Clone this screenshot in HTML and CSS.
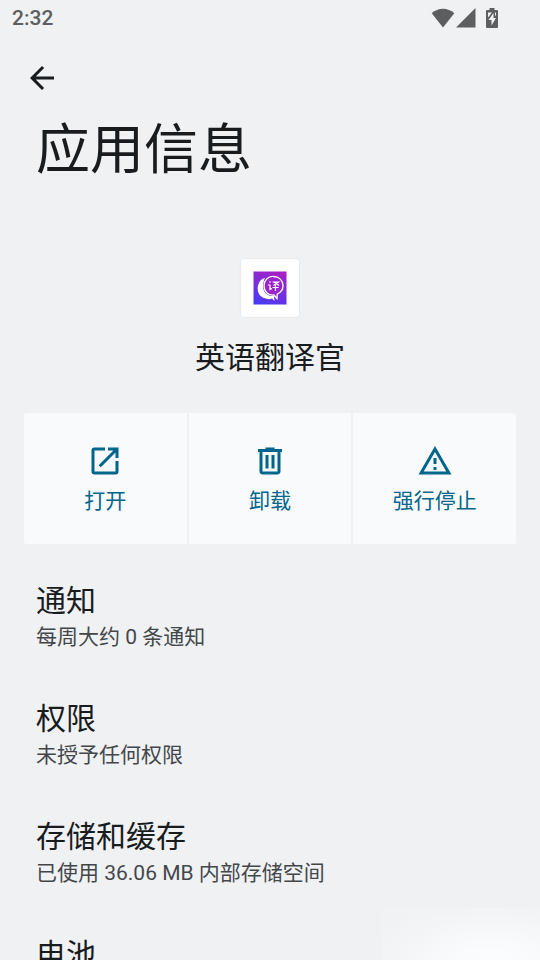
FILE: index.html
```html
<!DOCTYPE html>
<html lang="zh-CN">
<head>
<meta charset="utf-8">
<meta name="viewport" content="width=device-width, initial-scale=1">
<title>应用信息</title>
<link rel="stylesheet" href="styles.css">
</head>
<body>
<div class="screen">
  <header class="status-bar">
    <time class="clock">2:32</time>
    <div class="status-icons">
      <svg class="wifi" viewBox="0 0 24 20" aria-hidden="true"><path d="M12 19.500L.7 5.200C7-.8 17-.8 23.300 5.200z"/></svg>
      <svg class="signal" viewBox="0 0 20 20" aria-hidden="true"><path d="M0 19.500L19.500 0v19.500z"/></svg>
      <svg class="battery" viewBox="0 0 12 20" aria-hidden="true"><path fill-rule="evenodd" d="M3.500 0h5v2H11q1 0 1 1v16q0 1-1 1H1q-1 0-1-1V3q0-1 1-1h2.500zM7.500 5L2.500 12h3v5.500l4.500-7.500H7.500z"/><path class="battery-cut" d="M2 4.500h4L2 9.500zM9 4.500h1v3H9z"/></svg>
    </div>
  </header>
  <nav class="toolbar">
    <button class="back" type="button" aria-label="返回">
      <svg class="icon" viewBox="0 0 24 24" aria-hidden="true"><path d="M20 11H7.830l5.590-5.590L12 4l-8 8 8 8 1.410-1.410L7.830 13H20z"/></svg>
    </button>
  </nav>
  <main>
    <h1 class="page-title">应用信息</h1>
    <section class="app">
      <div class="app-icon">
        <svg viewBox="0 0 34 34" aria-hidden="true">
          <defs>
            <linearGradient id="logo-fill" x1="0.700" y1="0" x2="0.300" y2="1">
              <stop offset="0" stop-color="#a51fc4"/>
              <stop offset=".5" stop-color="#7a2fd9"/>
              <stop offset="1" stop-color="#4b3af5"/>
            </linearGradient>
          </defs>
          <rect x=".5" y=".5" width="33" height="33" fill="url(#logo-fill)"/>
          <path fill="#fff" d="M12 7C3 9 2 24 11 27q5 2 8 .5l2.500 2.500-.5-5C12 26 7 17 12 7z"/>
          <path fill="#9a24cb" stroke="#fff" stroke-width="1.300" d="M20.500 5.500C15 5 11 9.500 11 14.500c0 6 4 10 10 9.500l3 3.500.3-4.500c3.500-1.500 5.700-4.500 5.700-8.500 0-5-4-9-9.500-9z"/>
          <path fill="none" stroke="#fff" stroke-width="1.200" d="M16.500 10.500l1 1M15 14h2v4.500l2-1M19.500 11h6l-5 3.500M21 11l5 3.500M19.500 16.500h6M22.500 14v6"/>
        </svg>
      </div>
      <h2 class="app-name">英语翻译官</h2>
    </section>
    <div class="actions">
      <button class="action" type="button">
        <svg class="icon" viewBox="0 0 24 24" aria-hidden="true"><path d="M19 19H5V5h7V3H5a2 2 0 0 0-2 2v14a2 2 0 0 0 2 2h14a2 2 0 0 0 2-2v-7h-2zM14 3v2h3.590l-9.830 9.830 1.410 1.410L19 6.410V10h2V3z"/></svg>
        <span>打开</span>
      </button>
      <button class="action" type="button">
        <svg class="icon" viewBox="0 0 24 24" aria-hidden="true"><path d="M15 4V3H9v1H4v2h1v13c0 1.100.9 2 2 2h10c1.100 0 2-.9 2-2V6h1V4zm2 15H7V6h10zM9 8h2v9H9zm4 0h2v9h-2z"/></svg>
        <span>卸载</span>
      </button>
      <button class="action" type="button">
        <svg class="icon" viewBox="0 0 24 24" aria-hidden="true"><path d="M12 5.990L19.530 19H4.470zM12 2L1 21h22zm1 14h-2v2h2zm0-6h-2v4h2z"/></svg>
        <span>强行停止</span>
      </button>
    </div>
    <ul class="settings">
      <li class="setting"><h3>通知</h3><p>每周大约 0 条通知</p></li>
      <li class="setting"><h3>权限</h3><p>未授予任何权限</p></li>
      <li class="setting"><h3>存储和缓存</h3><p>已使用 36.06 MB 内部存储空间</p></li>
      <li class="setting"><h3>电池</h3></li>
    </ul>
  </main>
  <div class="corner-glow"></div>
</div>
</body>
</html>
```
FILE: styles.css
```css
* {
  box-sizing: border-box;
}

body,
h1,
h2,
h3,
p,
ul {
  margin: 0;
  padding: 0;
  font-weight: 400;
}

body {
  background: #eff1f3;
  color: #191c1e;
  font-family: Roboto, "Noto Sans CJK SC", sans-serif;
}

button {
  border: 0;
  padding: 0;
  background: none;
  color: inherit;
  font: inherit;
}

svg {
  display: block;
  fill: currentColor;
}

.screen {
  position: relative;
  height: 100vh;
  overflow: hidden;
}

.status-bar {
  display: flex;
  align-items: center;
  justify-content: space-between;
  height: 36px;
  padding: 0 42px 0 12px;
  color: #5c5e60;
}

.clock {
  font-size: 21px;
  font-weight: 500;
  line-height: 36px;
}

.status-icons {
  display: flex;
  align-items: center;
}

.wifi {
  width: 24px;
  height: 20px;
}

.signal {
  width: 20px;
  height: 20px;
  margin: 0 10px 0 1px;
}

.battery {
  width: 12px;
  height: 20px;
}

.battery-cut {
  fill: #eff1f3;
}

.toolbar {
  padding: 24px 24px 0;
}

.icon {
  width: 36px;
  height: 36px;
}

.page-title {
  padding: 11px 36px 0;
  font-size: 54px;
  line-height: 80px;
}

.app {
  display: flex;
  flex-direction: column;
  align-items: center;
  gap: 21px;
  padding-top: 68px;
}

.app-icon {
  width: 58px;
  padding: 12px;
  border-radius: 4px;
  background: #fff;
  box-shadow: 0 0 3px rgba(0, 0, 0, 0.08);
}

.app-name {
  font-size: 30px;
  line-height: 40px;
}

.actions {
  display: grid;
  grid-template-columns: repeat(3, 1fr);
  gap: 2px;
  margin: 35px 24px 0;
  border-radius: 3px;
  overflow: hidden;
}

.action {
  display: flex;
  flex-direction: column;
  align-items: center;
  gap: 6px;
  padding: 30px 0 27px;
  background: #f9fafc;
  color: #00658b;
  font-size: 21px;
  line-height: 32px;
}

.settings {
  margin-top: 14px;
  list-style: none;
}

.setting {
  padding: 23px 36px;
}

.setting h3 {
  font-size: 30px;
  line-height: 40px;
}

.setting p {
  color: #43474a;
  font-size: 21px;
  line-height: 32px;
}

.corner-glow {
  position: absolute;
  right: 0;
  bottom: 0;
  width: 158px;
  height: 52px;
  background: radial-gradient(ellipse at 70% 110%, #fbfcfd 15%, #f0f2f4 80%);
}
```
